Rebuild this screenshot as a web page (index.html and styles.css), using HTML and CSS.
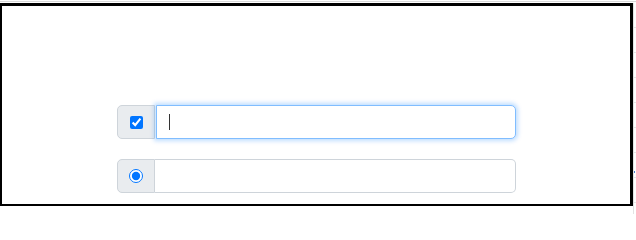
FILE: index.html
```html
<!DOCTYPE html>
<html>
<head>
<meta charset="utf-8">
<link rel="stylesheet" href="styles.css">
</head>
<body>
<div class="topline"></div>
<div class="page">
  <div class="frame">
    <div class="group">
      <div class="addon"><input type="checkbox" class="box" checked></div>
      <div class="control focused"><span class="caret"></span></div>
    </div>
    <div class="group">
      <div class="addon"><input type="radio" class="box radio" checked></div>
      <div class="control"></div>
    </div>
  </div>
  <div class="strip"><span class="dot"></span></div>
</div>
</body>
</html>
```
FILE: styles.css
```css
html, body {
  margin: 0;
  padding: 0;
  background: #fff;
  width: 636px;
  height: 214px;
  overflow: hidden;
  font-family: "Liberation Sans", Arial, sans-serif;
}
.topline {
  height: 3px;
  border-top: 1px solid #fff;
  box-sizing: border-box;
  background: linear-gradient(#d8d8d8 0 1px, #fff 1px);
}
.page {
  display: flex;
  height: 211px;
}
.frame {
  width: 634px;
  height: 203px;
  box-sizing: border-box;
  border: 2px solid #000;
  border-right-width: 3px;
  border-top-width: 3px;
  display: flex;
  flex-direction: column;
  align-items: center;
  padding-top: 99px;
  gap: 20px;
}
.group {
  display: flex;
  width: 399px;
  height: 34px;
  margin-left: 1px;
}
.addon {
  width: 38px;
  box-sizing: border-box;
  background: #e9ecef;
  border: 1px solid #ced4da;
  border-radius: 5px 0 0 5px;
  display: flex;
  align-items: center;
  justify-content: center;
}
.box {
  margin: 0;
  width: 13px;
  height: 13px;
}
.radio {
  width: 14px;
  height: 14px;
}
.control {
  flex: 1;
  box-sizing: border-box;
  border: 1px solid #ced4da;
  border-left: 0;
  border-radius: 0 5px 5px 0;
  background: #fff;
  display: flex;
  align-items: center;
  padding-left: 12px;
}
.control.focused {
  border: 1px solid #80bdff;
  margin-left: 1px;
  box-shadow: 0 0 4px 2px rgba(0, 123, 255, 0.25);
}
.caret {
  width: 1px;
  height: 16px;
  background: #333;
}
.strip {
  width: 2px;
  height: 211px;
  border-left: 1px solid #e3e3e3;
  position: relative;
  background: repeating-linear-gradient(#fff 0 24px, #e6e6e6 24px 25px);
}
.dot {
  position: absolute;
  left: 0;
  top: 168px;
  width: 1px;
  height: 2px;
  background: #4a78c8;
}
```
